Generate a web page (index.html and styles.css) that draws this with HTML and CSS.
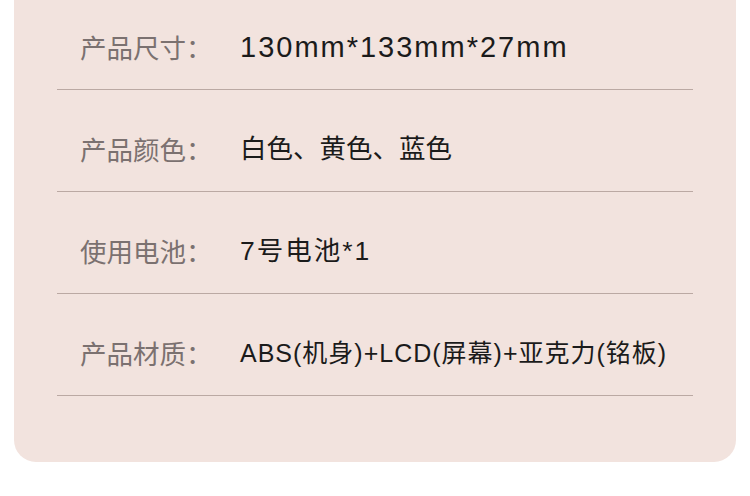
FILE: index.html
```html
<!DOCTYPE html>
<html lang="zh-CN">
<head>
<meta charset="utf-8">
<title>产品参数</title>
<link rel="stylesheet" href="styles.css">
</head>
<body>
<div class="card">
  <div class="row">
    <div class="label">产品尺寸：</div>
    <div class="value latin">130mm*133mm*27mm</div>
  </div>
  <div class="row">
    <div class="label">产品颜色：</div>
    <div class="value">白色、黄色、蓝色</div>
  </div>
  <div class="row">
    <div class="label">使用电池：</div>
    <div class="value mixed">7号电池*1</div>
  </div>
  <div class="row">
    <div class="label">产品材质：</div>
    <div class="value small">ABS(机身)+LCD(屏幕)+亚克力(铭板)</div>
  </div>
</div>
</body>
</html>
```

FILE: styles.css
```css
html, body {
  margin: 0;
  padding: 0;
  background: #ffffff;
}

body {
  width: 750px;
  height: 496px;
  overflow: hidden;
  font-family: "Liberation Sans", "Noto Sans CJK SC", sans-serif;
}

.card {
  margin: 0 14px;
  padding: 0 43px 66px;
  background: #f2e3de;
  border-radius: 0 0 22px 22px;
}

.row {
  display: grid;
  grid-template-columns: 160px 1fr;
  align-items: center;
  padding: 44px 0 27px 23px;
  border-bottom: 1px solid #bba9a3;
}

.row:first-child {
  padding-top: 32px;
}

.label {
  font-family: "Noto Sans CJK SC", sans-serif;
  font-size: 26.5px;
  line-height: 30px;
  color: #7b7170;
}

.value {
  font-size: 26.5px;
  line-height: 30px;
  color: #1b1b1b;
  white-space: nowrap;
}

.value.latin {
  font-size: 29px;
  letter-spacing: 2px;
}

.value.mixed {
  letter-spacing: 2px;
}

.value.small {
  font-size: 25px;
  letter-spacing: 1px;
}
```
